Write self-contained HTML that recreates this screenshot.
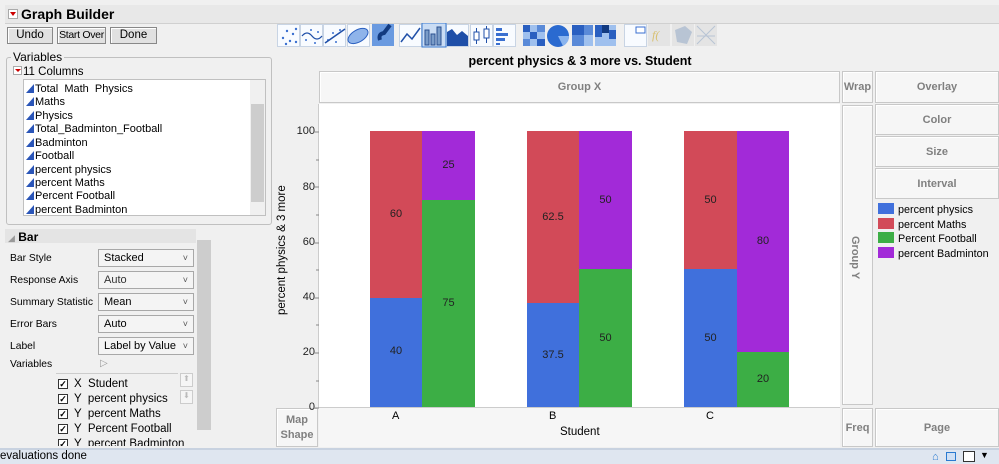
<!DOCTYPE html>
<html><head><meta charset="utf-8"><style>
*{box-sizing:border-box;margin:0;padding:0}
body{width:999px;height:464px;overflow:hidden;background:#f0f0f0;font-family:"Liberation Sans",sans-serif;font-size:11px;color:#000;position:relative}
.a{position:absolute}
.btn{position:absolute;border:1px solid #888;background:#e1e1e1;box-shadow:inset 1px 1px 0 #fff;font-size:11.5px;text-align:center;line-height:15px;white-space:nowrap;overflow:hidden}
.zone{position:absolute;border:1px solid #c8c8c8;background:#f6f6f6;color:#808080;font-weight:bold;font-size:11px;text-align:center;box-shadow:inset 1px 1px 0 #fff}
.sel{position:absolute;left:98px;width:96px;height:18px;border:1px solid #a8a8a8;background:#f4f4f4;font-size:11px;padding-left:5px;line-height:16px}
.sel:after{content:"˅";position:absolute;right:5px;top:0;font-size:9px;color:#555}
.lab{position:absolute;left:10px;font-size:10.3px;white-space:nowrap}
.vi{position:absolute;left:26px;font-size:11px;line-height:13px}
.vi:before{content:"";display:inline-block;width:0;height:0;border-left:8px solid transparent;border-bottom:9px solid #2a55b8;margin-right:1px;vertical-align:-1px}
.bar{position:absolute;text-align:center;color:#222;font-size:11px}
.tk{position:absolute;right:684px;font-size:11px;color:#222;text-align:right}
.chk{position:absolute;left:58px;font-size:11.5px;white-space:nowrap}
.chk b{display:inline-block;width:10px;height:10px;border:1px solid #333;background:#fff;font-size:9px;line-height:8px;text-align:center;margin-right:6px;font-weight:bold}
</style></head><body>
<div class="a" style="left:5px;top:5px;width:994px;height:19px;background:#e8e8e8;border-bottom:1px solid #d0d0d0"></div>
<div class="a" style="left:8px;top:9px;width:10px;height:10px;background:#fff;border:1px solid #aaa"></div>
<div class="a" style="left:10px;top:12px;width:0;height:0;border-left:3px solid transparent;border-right:3px solid transparent;border-top:4px solid #c00"></div>
<div class="a" style="left:21px;top:6px;font-size:14px;font-weight:bold">Graph Builder</div>
<div class="btn" style="left:7px;top:27px;width:46px;height:17px">Undo</div>
<div class="btn" style="left:57px;top:27px;width:49px;height:17px;font-size:10.5px;letter-spacing:-0.3px">Start Over</div>
<div class="btn" style="left:110px;top:27px;width:47px;height:17px">Done</div>
<div class="a" style="left:6px;top:57px;width:266px;height:168px;border:1px solid #c0c0c0;border-radius:3px"></div>
<div class="a" style="left:11px;top:50px;background:#f0f0f0;padding:0 2px;font-size:12px">Variables</div>
<div class="a" style="left:13px;top:66px;width:9px;height:9px;background:#fff;border:1px solid #aaa"></div>
<div class="a" style="left:15px;top:69px;border-left:3px solid transparent;border-right:3px solid transparent;border-top:3px solid #c00"></div>
<div class="a" style="left:23px;top:66px;font-size:11.5px">11 Columns</div>
<div class="a" style="left:23px;top:79px;width:243px;height:137px;background:#fff;border:1px solid #c0c0c0"></div>
<div class="a" style="left:250px;top:80px;width:15px;height:135px;background:#f0f0f0"></div>
<div class="a" style="left:251px;top:104px;width:13px;height:98px;background:#cdcdcd"></div>
<div class="vi" style="top:83px">Total &nbsp;Math &nbsp;Physics</div>
<div class="vi" style="top:96px">Maths</div>
<div class="vi" style="top:110px">Physics</div>
<div class="vi" style="top:123px">Total_Badminton_Football</div>
<div class="vi" style="top:137px">Badminton</div>
<div class="vi" style="top:150px">Football</div>
<div class="vi" style="top:164px">percent physics</div>
<div class="vi" style="top:177px">percent Maths</div>
<div class="vi" style="top:190px">Percent Football</div>
<div class="vi" style="top:204px">percent Badminton</div>
<div class="a" style="left:197px;top:228px;width:14px;height:218px;background:#cdcdcd"></div>
<div class="a" style="left:197px;top:228px;width:14px;height:12px;background:#f0f0f0"></div>
<div class="a" style="left:197px;top:430px;width:14px;height:16px;background:#f0f0f0"></div>
<div class="a" style="left:5px;top:229px;width:191px;height:14px;background:#e4e4e4"></div>
<div class="a" style="left:8px;top:230px;font-size:12px;font-weight:bold"><span style="color:#999;font-weight:normal;font-size:9px">◢</span> Bar</div>
<div class="lab" style="top:253px">Bar Style</div><div class="sel" style="top:249px">Stacked</div>
<div class="lab" style="top:275px">Response Axis</div><div class="sel" style="top:271px;color:#333">Auto</div>
<div class="lab" style="top:297px">Summary Statistic</div><div class="sel" style="top:293px">Mean</div>
<div class="lab" style="top:319px">Error Bars</div><div class="sel" style="top:315px">Auto</div>
<div class="lab" style="top:341px">Label</div><div class="sel" style="top:337px">Label by Value</div>
<div class="lab" style="top:359px">Variables</div>
<div class="a" style="left:100px;top:358px;color:#999;font-size:10px">▷</div>
<div class="a" style="left:56px;top:373px;width:122px;border-top:1px solid #ccc"></div>
<div class="a" style="left:180px;top:373px;width:13px;height:14px;border:1px solid #ccc;background:#f5f5f5;color:#bbb;font-size:8px;text-align:center">⬆</div>
<div class="a" style="left:180px;top:390px;width:13px;height:14px;border:1px solid #ccc;background:#f5f5f5;color:#bbb;font-size:8px;text-align:center">⬇</div>
<div class="chk" style="top:378px"><b>✓</b>X &nbsp;Student</div>
<div class="chk" style="top:393px"><b>✓</b>Y &nbsp;percent physics</div>
<div class="chk" style="top:408px"><b>✓</b>Y &nbsp;percent Maths</div>
<div class="chk" style="top:423px"><b>✓</b>Y &nbsp;Percent Football</div>
<div class="chk" style="top:438px;height:8px;overflow:hidden"><b>✓</b>Y &nbsp;percent Badminton</div>
<svg class="a" style="left:276px;top:23px" width="445" height="26" viewBox="276 23 445 26">
<g fill="#f8fbff" stroke="#c8d4e4">
<rect x="277.5" y="24.5" width="22" height="22"/><rect x="300.5" y="24.5" width="22" height="22"/><rect x="323.5" y="24.5" width="22" height="22"/><rect x="347.5" y="24.5" width="22" height="22"/>
<rect x="399.5" y="24.5" width="22" height="22"/><rect x="446.5" y="24.5" width="22" height="22"/><rect x="470.5" y="24.5" width="22" height="22"/><rect x="493.5" y="24.5" width="22" height="22"/><rect x="624.5" y="24.5" width="22" height="22"/>
</g>
<g fill="#3a6fd0">
<circle cx="283" cy="38" r="1.2"/><circle cx="287" cy="31" r="1.2"/><circle cx="290" cy="41" r="1.2"/><circle cx="293" cy="34" r="1.2"/><circle cx="296" cy="29" r="1.2"/><circle cx="286" cy="44" r="1.2"/><circle cx="296" cy="42" r="1.2"/>
<circle cx="306" cy="40" r="1"/><circle cx="311" cy="30" r="1"/><circle cx="315" cy="43" r="1"/><circle cx="318" cy="32" r="1"/>
<circle cx="328" cy="40" r="1"/><circle cx="333" cy="33" r="1"/><circle cx="340" cy="30" r="1"/><circle cx="336" cy="42" r="1"/>
</g>
<path d="M302 36 q5 -6 10 0 t10 0" stroke="#1f4fa8" fill="none" stroke-width="1.3"/>
<path d="M325 43 L345 29" stroke="#1f4fa8" stroke-width="1.5"/>
<ellipse cx="358" cy="36" rx="11" ry="6" transform="rotate(-30 358 36)" fill="#8fb4ea" stroke="#2a5fc0"/>
<rect x="372" y="24" width="22" height="22" fill="#6a9ae0"/><path d="M380 40 q-2 -6 4 -7 l6 -8" stroke="#123a80" stroke-width="4" fill="none"/>
<path d="M401 42 l6 -8 l5 5 l8 -11" stroke="#1f4fa8" stroke-width="1.5" fill="none"/>
<rect x="422" y="23" width="24" height="24" fill="#c9dcf4" stroke="#3a7ad0"/>
<g fill="#7a9cc8" stroke="#2a4f90"><rect x="425" y="30" width="4" height="15"/><rect x="431" y="34" width="4" height="11"/><rect x="437" y="27" width="4" height="18"/></g>
<path d="M447 46 v-14 l5 -3 l5 6 l5 -4 l6 5 v10z" fill="#1f4fa8"/>
<g stroke="#1f4fa8" fill="#fff"><rect x="474" y="32" width="5" height="8"/><rect x="484" y="29" width="5" height="9"/><path d="M476.5 28v4M476.5 40v4M486.5 26v3M486.5 38v5"/></g>
<g fill="#3a6fd0"><rect x="496" y="28" width="6" height="3"/><rect x="496" y="33" width="12" height="3"/><rect x="496" y="38" width="9" height="3"/><rect x="496" y="43" width="4" height="2"/></g>
<g><rect x="523" y="25" width="22" height="21" fill="#9fc0ee"/><rect x="523" y="25" width="7" height="7" fill="#2a5fc0"/><rect x="537" y="25" width="8" height="7" fill="#5a8ad8"/><rect x="530" y="32" width="7" height="7" fill="#2a5fc0"/><rect x="523" y="39" width="7" height="7" fill="#5a8ad8"/><rect x="537" y="39" width="8" height="7" fill="#2a5fc0"/></g>
<circle cx="558" cy="36" r="11" fill="#2a6ad0"/><path d="M558 36 l11 0 a11 11 0 0 1 -6 10z" fill="#8ab4ee"/>
<g><rect x="572" y="25" width="21" height="21" fill="#5a8ad8"/><rect x="572" y="25" width="12" height="10" fill="#2a5fc0"/><rect x="584" y="35" width="9" height="11" fill="#9fc0ee"/></g>
<g><rect x="595" y="25" width="21" height="21" fill="#9fc0ee"/><rect x="595" y="25" width="7" height="12" fill="#2a5fc0"/><rect x="602" y="25" width="7" height="8" fill="#123a80"/><rect x="609" y="30" width="7" height="9" fill="#2a5fc0"/></g>
<rect x="636" y="27" width="9" height="6" fill="#fff" stroke="#3a6fd0"/>
<rect x="648" y="24" width="22" height="22" fill="#e4e4e4"/><text x="652" y="39" font-size="12" fill="#d8c070" font-style="italic" font-family="Liberation Serif">f(</text>
<rect x="672" y="24" width="22" height="22" fill="#e4e4e4"/><path d="M675 30 l10 -4 l7 6 l-5 12 l-10 -2z" fill="#b8c4d4"/>
<rect x="695" y="24" width="22" height="22" fill="#e4e4e4"/><path d="M697 26 l18 18 M715 26 l-18 18 M697 36 h18" stroke="#b8c4d4"/>
</svg>
<div class="a" style="left:320px;top:54px;width:520px;text-align:center;font-size:12.5px;font-weight:bold">percent physics &amp; 3 more vs. Student</div>
<div class="zone" style="left:319px;top:71px;width:521px;height:32px;line-height:31px">Group X</div>
<div class="zone" style="left:842px;top:71px;width:31px;height:32px;line-height:31px">Wrap</div>
<div class="zone" style="left:875px;top:71px;width:124px;height:32px;line-height:31px">Overlay</div>
<div class="zone" style="left:875px;top:104px;width:124px;height:31px;line-height:30px">Color</div>
<div class="zone" style="left:875px;top:136px;width:124px;height:31px;line-height:30px">Size</div>
<div class="zone" style="left:875px;top:168px;width:124px;height:31px;line-height:30px">Interval</div>
<div class="zone" style="left:842px;top:105px;width:31px;height:300px"><div style="position:absolute;left:6px;top:130px;writing-mode:vertical-rl">Group Y</div></div>
<div class="zone" style="left:842px;top:408px;width:31px;height:39px;line-height:38px">Freq</div>
<div class="zone" style="left:875px;top:408px;width:124px;height:39px;line-height:38px">Page</div>
<div class="zone" style="left:276px;top:408px;width:42px;height:39px;line-height:15px;padding-top:4px">Map<br>Shape</div>
<div class="a" style="left:878px;top:203px;font-size:10.8px;line-height:13.5px">
<div><span style="display:inline-block;width:16px;height:11px;background:#4070dc;vertical-align:-1px;margin-right:4px"></span>percent physics</div>
<div><span style="display:inline-block;width:16px;height:11px;background:#d24a58;vertical-align:-1px;margin-right:4px"></span>percent Maths</div>
<div><span style="display:inline-block;width:16px;height:11px;background:#3cae45;vertical-align:-1px;margin-right:4px"></span>Percent Football</div>
<div><span style="display:inline-block;width:16px;height:11px;background:#a22ad8;vertical-align:-1px;margin-right:4px"></span>percent Badminton</div>
</div>
<div class="a" style="left:318px;top:104px;width:522px;height:304px;background:#fff;border-left:1px solid #ccc;border-bottom:1px solid #ccc"></div>
<div class="tk" style="top:125px">100</div><div class="tk" style="top:181px">80</div><div class="tk" style="top:236px">60</div><div class="tk" style="top:291px">40</div><div class="tk" style="top:346px">20</div><div class="tk" style="top:401px">0</div>
<svg class="a" style="left:310px;top:100px" width="10" height="312"><g stroke="#888"><path d="M3 32h6M3 87h6M3 143h6M3 198h6M3 253h6M3 308h6M6 60h3M6 115h3M6 170h3M6 225h3M6 281h3"/></g></svg>
<div class="a" style="left:276px;top:315px;transform:rotate(-90deg);transform-origin:left top;white-space:nowrap;font-size:11.5px">percent physics &amp; 3 more</div>
<div class="bar" style="left:370px;top:298px;width:52px;height:109px;background:#4070dc;line-height:106px">40</div>
<div class="bar" style="left:370px;top:131px;width:52px;height:167px;background:#d24a58;line-height:167px">60</div>
<div class="bar" style="left:422px;top:200px;width:53px;height:207px;background:#3cae45;line-height:207px">75</div>
<div class="bar" style="left:422px;top:131px;width:53px;height:69px;background:#a22ad8;line-height:69px">25</div>
<div class="bar" style="left:527px;top:303px;width:52px;height:104px;background:#4070dc;line-height:104px">37.5</div>
<div class="bar" style="left:527px;top:131px;width:52px;height:172px;background:#d24a58;line-height:172px">62.5</div>
<div class="bar" style="left:579px;top:269px;width:53px;height:138px;background:#3cae45;line-height:138px">50</div>
<div class="bar" style="left:579px;top:131px;width:53px;height:138px;background:#a22ad8;line-height:138px">50</div>
<div class="bar" style="left:684px;top:269px;width:53px;height:138px;background:#4070dc;line-height:138px">50</div>
<div class="bar" style="left:684px;top:131px;width:53px;height:138px;background:#d24a58;line-height:138px">50</div>
<div class="bar" style="left:737px;top:352px;width:52px;height:55px;background:#3cae45;line-height:55px">20</div>
<div class="bar" style="left:737px;top:131px;width:52px;height:221px;background:#a22ad8;line-height:221px">80</div>
<div class="a" style="left:319px;top:408px;width:521px;height:39px;background:#f6f6f6"></div>
<div class="a" style="left:392px;top:410px;font-size:11px">A</div>
<div class="a" style="left:549px;top:410px;font-size:11px">B</div>
<div class="a" style="left:706px;top:410px;font-size:11px">C</div>
<div class="a" style="left:560px;top:426px;font-size:11.5px">Student</div>
<div class="a" style="left:0;top:448px;width:999px;height:16px;background:#dfe6f0;border-top:2px solid #c8d2e0"></div>
<div class="a" style="left:0;top:450px;font-size:11.5px">evaluations done</div>
<div class="a" style="left:932px;top:451px;color:#2a7ad0;font-size:11px">⌂</div>
<div class="a" style="left:946px;top:452px;width:10px;height:9px;border:1px solid #2a7ad0;background:#cfe0f5"></div>
<div class="a" style="left:963px;top:451px;width:12px;height:11px;border:1px solid #333;background:#fff"></div>
<div class="a" style="left:980px;top:450px;font-size:9px">▼</div>
</body></html>
